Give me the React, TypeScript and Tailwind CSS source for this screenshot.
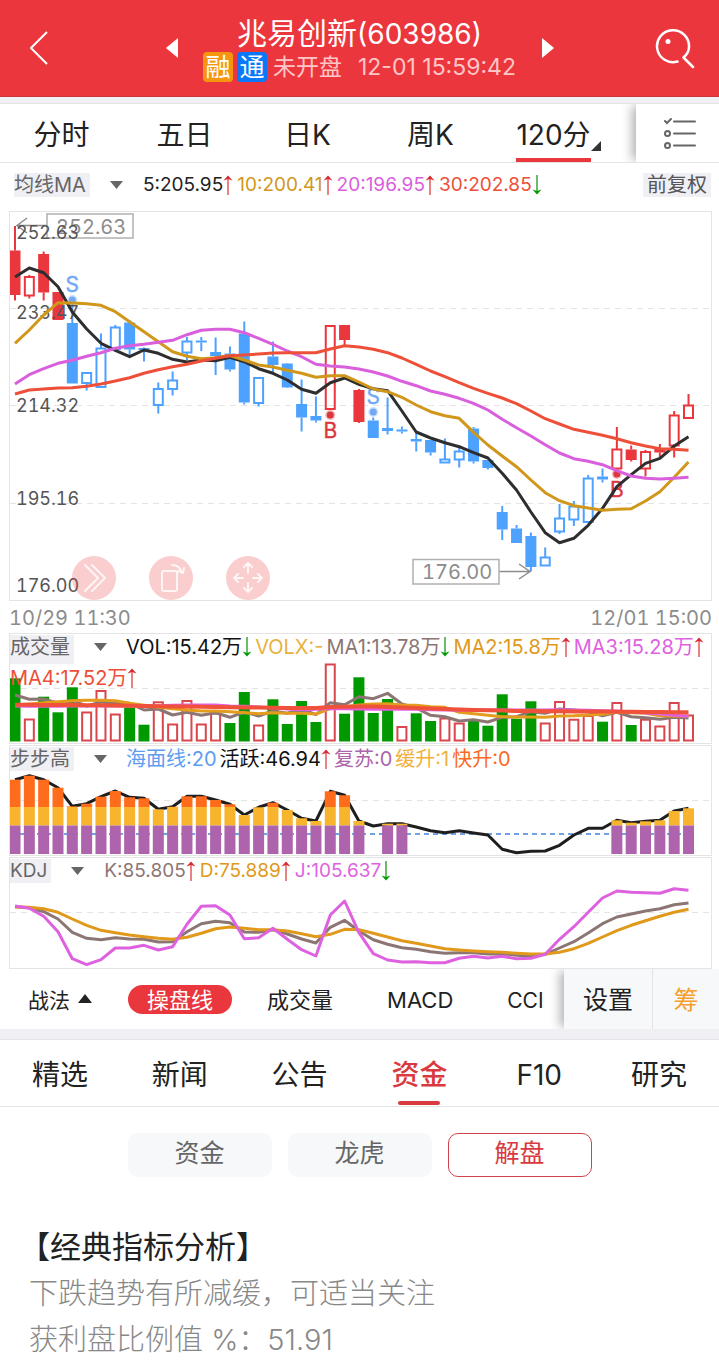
import React from "react";

const RED = "#ea363d";
const BLUE = "#4da1ff";

const STEP = 14.33;
const xAt = (i: number) => 15 + i * STEP;

type Kind = "R" | "r" | "B" | "b"; // upper case: filled body, lower case: hollow body
// kind, body top, body bottom, wick top, wick bottom
type Candle = [Kind, number, number, number, number];

const candles: Candle[] = [
  ["R", 250.5, 295, 226, 300.5], ["r", 277, 295.5, 275, 298.5], ["R", 254, 292.5, 251.5, 300.5], ["R", 292, 320, 292, 320],
  ["B", 323, 383.5, 300, 383.5], ["b", 373, 383, 373, 390.5], ["b", 348.5, 387, 333.5, 387], ["b", 327.5, 349, 325, 349],
  ["B", 322.5, 349.5, 320, 356], ["B", 348, 350, 347.5, 361.5], ["b", 389, 405, 382.5, 413.5], ["b", 380.5, 389, 371.5, 395.5],
  ["b", 341.5, 352.5, 337, 360], ["B", 340.5, 342.5, 337, 351], ["b", 353, 355, 337.5, 375], ["B", 353.5, 369.5, 346.5, 371.5],
  ["B", 333.5, 402.5, 321.5, 404.5], ["b", 378, 403, 378, 406.5], ["B", 356.5, 365, 341.5, 372.5], ["B", 363.5, 387.5, 363, 388],
  ["B", 404, 417.5, 379.5, 431.5], ["B", 416, 420.5, 396.5, 422.5], ["r", 326, 409, 326, 409], ["R", 325, 340, 325, 345],
  ["R", 390, 422, 389, 423], ["B", 420.5, 438, 417.5, 438], ["B", 428, 431, 397.5, 434.5], ["B", 429.5, 431.5, 426.5, 433.5],
  ["B", 439, 441.5, 432, 451.5], ["B", 440, 452.5, 440, 455.5], ["b", 459.5, 462.5, 438.5, 463], ["b", 451.5, 459.5, 445, 467.5],
  ["B", 428.5, 461.5, 427, 463.5], ["B", 460, 468, 460, 469.5], ["B", 512, 529.5, 506, 540], ["B", 528.5, 543, 525, 543],
  ["B", 536, 567, 532.5, 571.5], ["b", 557.5, 565.5, 547.5, 565.5], ["b", 518.5, 531.5, 504, 534], ["b", 506.5, 519.5, 501, 526],
  ["b", 478.5, 522, 475, 522], ["B", 476.5, 479.5, 468.5, 482.5], ["r", 449.5, 468.5, 427, 468.5], ["R", 449.5, 460, 445.5, 461.5],
  ["r", 452, 468.5, 450, 476.5], ["R", 448.5, 452.5, 444, 457], ["r", 415.5, 445.5, 411, 457.5], ["r", 405.5, 418, 394, 418],
];

const ma5 = [277, 268, 272.7, 286.7, 312, 329, 343.3, 350.3, 356.7, 350, 353.3, 359.3, 362, 360, 360.7, 357.3, 361.7, 368.7, 373.3, 380, 389.3, 393.3, 382.7, 378, 384.3, 388.7, 390.7, 411, 432, 438, 442.7, 446.7, 452.7, 458, 473.3, 490, 512, 532.7, 542.7, 538.3, 525.3, 508.3, 486.7, 474.7, 463.3, 458.3, 446, 436.7];
const ma10 = [343.3, 330, 315, 302.7, 303, 303.7, 305.3, 311.7, 321.7, 331.7, 341.7, 351.7, 356.3, 358.7, 357.7, 355.5, 360, 365, 367, 370.3, 373.3, 377.3, 375.7, 375.7, 382, 389, 391.7, 397.3, 405, 411.7, 415.7, 418.3, 432.3, 445, 456, 466.7, 480, 492.7, 500.7, 505.7, 508, 510.3, 509.3, 508.7, 501, 491.7, 477.3, 462];
const ma20 = [384, 374.7, 368.7, 363.3, 360.3, 356.3, 352.7, 348.3, 345.7, 344.3, 342.3, 340.3, 334.7, 330.3, 329.3, 329.3, 332.7, 338.3, 344.3, 351, 356.7, 364.3, 366, 367, 369, 372, 376, 381.3, 385.7, 391, 394.3, 398.3, 403.3, 410, 419.3, 427.7, 436, 444.7, 453, 458.7, 461.3, 464.7, 470.7, 476, 478.3, 479, 478.3, 477.3];
const ma30 = [394, 390, 389, 388, 387.7, 386.3, 384, 381, 377.7, 373.3, 369.7, 366.7, 364.3, 361, 358.3, 355.7, 355, 354, 353, 352.7, 352.7, 352.7, 349, 345.7, 347, 349.3, 352.7, 358, 364.3, 371, 376.7, 382.7, 388.3, 393.3, 398, 403.7, 411, 418.7, 424, 429.3, 432.3, 435.3, 438.7, 442.7, 446, 448.7, 449.3, 450.3];

const volumeTops = [678.3, 719.5, 696.7, 712.3, 687.3, 712.5, 691, 714.5, 707.5, 724.7, 702.3, 724.5, 701, 724.5, 713.5, 723, 692, 725.5, 699.3, 724, 701, 722, 664.5, 713.7, 677.3, 713, 699, 727, 713.3, 721, 718.5, 723.5, 721, 725.7, 694.3, 718.7, 701.3, 723.5, 702, 719.7, 716, 721.7, 703, 725, 719.7, 726.5, 703, 715.5];
const volumeKinds = "grgggrrrggrrrrrggrggggrggggrggrrgggggrrrrgrgrrrr";
const vma1 = [695, 699.3, 699, 703.3, 700.7, 706, 702, 703.3, 703.3, 710, 709, 715, 712.3, 715.3, 712.7, 717.3, 712, 716, 711, 713.3, 709, 714.7, 702.7, 704.7, 696.7, 698.7, 693.3, 704, 708, 715.3, 716.7, 721, 719.7, 722, 717.3, 716.7, 711.7, 713.3, 709, 710, 711.7, 715.7, 712.3, 716.7, 717.7, 719.3, 717.3, 718];
const vma2 = [705, 704, 702.7, 701.7, 700.7, 700.3, 700.3, 700.7, 703.3, 705.3, 707.3, 708.7, 710, 711, 711, 711.7, 712.7, 713.7, 712.7, 713.3, 713.3, 714, 708.7, 706.7, 705, 704, 703.7, 705, 705.3, 706.7, 707.3, 712.3, 713.7, 715.3, 716.7, 717, 717, 717.3, 716, 715.7, 715, 714.3, 712, 712.7, 713.3, 715.7, 716, 716];
const vma3 = [706, 706.3, 706.3, 706.3, 706, 706, 706, 706, 706, 706, 705.7, 705.3, 705, 705, 705, 706, 706.3, 707, 708, 709, 710, 709.3, 708.7, 708.7, 709, 709.3, 709.3, 709.3, 709.3, 709.7, 710, 710.3, 710, 710, 710, 710, 710, 710, 709.7, 710, 710.3, 710.7, 711, 712, 713, 714, 715.3, 716.3];
const vma4 = [704.7, 704.7, 705, 705, 705, 705.3, 705.3, 705.6, 705.8, 706, 706.2, 706.4, 706.6, 706.8, 707, 707.2, 707.4, 707.6, 707.8, 708, 708, 708, 707, 706.7, 706.6, 706.6, 707, 707.4, 708, 708.5, 709, 709.5, 710, 710.3, 710.6, 711, 711, 711.2, 711.3, 711.4, 711.5, 711.6, 711.7, 711.8, 712, 712.1, 712.2, 712.3];

const activity = [779.7, 775.7, 779.7, 787.7, 806.3, 803.7, 796.7, 791, 797.3, 798.3, 809.3, 806.7, 796.3, 796.3, 800, 804.3, 815, 807.3, 802.7, 810, 818.3, 821, 791.3, 795.3, 821, 826, 823.7, 823.7, 827, 830.7, 832.7, 830.7, 833, 835, 849.3, 852.7, 851.3, 851, 845.3, 835, 828.3, 828.3, 820.3, 822.7, 821.3, 820.3, 811, 808.3];

const kLine = [906.7, 907.7, 911.7, 919, 932.3, 938.3, 939.7, 937.7, 939, 939.3, 942, 941.7, 931.7, 923.7, 921.3, 922.7, 932, 932.3, 929.7, 934, 939, 943, 927.3, 920.3, 931, 939.7, 944.3, 947.7, 949.3, 951.7, 953.3, 952.7, 952.7, 954, 953.7, 955.3, 956, 954.3, 948, 941.7, 933, 923.7, 917, 914, 911, 908.7, 904.7, 903];
const dLine = [907, 907.3, 908.7, 912.3, 919, 925.3, 930.3, 932.7, 935, 936.7, 938.3, 939.3, 937.3, 933.3, 928.7, 927, 928.3, 929.7, 929.7, 931, 933.7, 936.7, 934.3, 929.3, 929.7, 933.3, 937, 940.7, 943.3, 946, 948.7, 950, 951, 951.7, 952.3, 953.3, 954, 954, 952.3, 948.7, 943.3, 937, 930.7, 925.3, 920.7, 916.3, 912.3, 909.3];
const jLine = [906, 908.3, 916.3, 931.7, 958.7, 964.7, 959.7, 948, 948, 945.3, 950, 946.7, 924.3, 906.3, 905.7, 915, 938.7, 937.7, 928.3, 939.3, 949.7, 956, 915, 901, 932.7, 953.7, 960, 962, 961.7, 962.7, 962.7, 958.3, 956.3, 958, 956.3, 958.7, 958.3, 954.3, 939.3, 926.7, 912.3, 898, 891, 892.3, 892.7, 893.3, 888.7, 890.3];

function Line({ data, color, width = 3 }: { data: number[]; color: string; width?: number }) {
  return (
    <polyline
      points={data.map((y, i) => `${xAt(i).toFixed(1)},${y}`).join(" ")}
      fill="none"
      stroke={color}
      strokeWidth={width}
      strokeLinejoin="round"
    />
  );
}

function GridLine({ y }: { y: number }) {
  return <line x1="10" x2="711" y1={y} y2={y} stroke="#e4e4e4" strokeDasharray="6 5" />;
}

function CandleShape({ candle, i }: { candle: Candle; i: number }) {
  const [kind, top, bottom, high, low] = candle;
  const color = kind.toLowerCase() === "r" ? RED : BLUE;
  const hollow = kind === kind.toLowerCase();
  const x = xAt(i);
  return (
    <g stroke={color}>
      {high < top && <line x1={x} x2={x} y1={high} y2={top} strokeWidth="2" />}
      {low > bottom && <line x1={x} x2={x} y1={bottom} y2={low} strokeWidth="2" />}
      {hollow ? (
        <rect x={x - 4.5} y={top} width="9" height={bottom - top} fill="none" strokeWidth="2" />
      ) : (
        <rect x={x - 5.5} y={top} width="11" height={bottom - top} fill={color} stroke="none" />
      )}
    </g>
  );
}

function Mark({ i, y, dot, label, color }: { i: number; y: number; dot: number; label: string; color: string }) {
  return (
    <g fill={color}>
      <circle cx={xAt(i)} cy={dot} r="5" opacity="0.35" />
      <circle cx={xAt(i)} cy={dot} r="3.5" />
      <text x={xAt(i)} y={y} textAnchor="middle" fontSize="21" stroke={color} strokeWidth="0.4">{label}</text>
    </g>
  );
}

function PriceChart() {
  const labels: [string, number][] = [["252.63", 239], ["233.47", 319], ["214.32", 412], ["195.16", 505], ["176.00", 592]];
  return (
    <svg viewBox="10 212 701 388" className="block w-full tabular-nums" role="img" aria-label="120分K线图">
      {[308.5, 405.5, 503.5].map((y) => <GridLine key={y} y={y} />)}
      {candles.map((c, i) => <CandleShape key={i} candle={c} i={i} />)}
      <g fill="none" stroke="#8c8c8c" strokeWidth="1.5">
        <path d="M47 225.5H17M27 218L17 225.5L27 233" />
        <path d="M499 571.5H530M519 564L530 571.5L519 579" />
      </g>
      <g fill="none" stroke="#b0b0b0" strokeWidth="1.5">
        <rect x="47" y="214" width="86" height="24" />
        <rect x="413" y="559.5" width="86" height="24.5" />
      </g>
      <g fill="#8c8c8c" fontSize="20">
        <text x="56" y="234">252.63</text>
        <text x="422" y="579">176.00</text>
      </g>
      <g fill="#555" fontSize="18">
        {labels.map(([t, y]) => <text key={t} x="16" y={y}>{t}</text>)}
      </g>
      <Mark i={4} y={292} dot={300} label="S" color="#72a8f5" />
      <Mark i={25} y={404} dot={412} label="S" color="#72a8f5" />
      <Mark i={22} y={438} dot={415} label="B" color="#d9383e" />
      <Mark i={42} y={497} dot={474} label="B" color="#d9383e" />
      <Line data={ma5} color="#2e2e2e" />
      <Line data={ma10} color="#d0971b" />
      <Line data={ma20} color="#d95fdc" />
      <Line data={ma30} color="#ed4f38" />
    </svg>
  );
}

function VolumeChart() {
  return (
    <svg viewBox="10 634 701 109" className="block w-full [grid-area:1/1]" role="img" aria-label="成交量图">
      <GridLine y={688.5} />
      {volumeTops.map((y, i) =>
        volumeKinds[i] === "g" ? (
          <rect key={i} x={xAt(i) - 5.5} y={y} width="11" height={741.5 - y} fill="#009a00" />
        ) : (
          <rect key={i} x={xAt(i) - 4.5} y={y} width="9" height={740.5 - y} fill="#fff" stroke="#d9464b" strokeWidth="2" />
        ),
      )}
      <Line data={vma1} color="#8c7674" />
      <Line data={vma2} color="#e39c1b" />
      <Line data={vma3} color="#e35fdf" />
      <Line data={vma4} color="#f0513a" width={4} />
    </svg>
  );
}

function ActivityChart() {
  return (
    <svg viewBox="10 746 701 109" className="block w-full [grid-area:1/1]" role="img" aria-label="步步高图">
      <GridLine y={800.5} />
      <line x1="10" x2="690" y1="834" y2="834" stroke="#6ea3e8" strokeWidth="2" strokeDasharray="5 4" />
      <Line data={activity} color="#1e1e1e" />
      {activity.map((y, i) =>
        y < 825 ? (
          <g key={i}>
            {y < 807 && <rect x={xAt(i) - 5.5} y={y} width="11" height={807 - y} fill="#ff6c1c" />}
            <rect x={xAt(i) - 5.5} y={Math.max(y, 807)} width="11" height={825.5 - Math.max(y, 807)} fill="#f8b42d" />
            <rect x={xAt(i) - 5.5} y="825.5" width="11" height="28.5" fill="#ad64ac" />
          </g>
        ) : null,
      )}
    </svg>
  );
}

function KdjChart() {
  return (
    <svg viewBox="10 858 701 110" className="block w-full [grid-area:1/1]" role="img" aria-label="KDJ图">
      <GridLine y={912.5} />
      <Line data={kLine} color="#8c7674" />
      <Line data={dLine} color="#e0991a" />
      <Line data={jLine} color="#de62df" />
    </svg>
  );
}

function Trend({ up }: { up: boolean }) {
  return (
    <svg viewBox="0 0 10 20" className="h-5 w-[10px] shrink-0" aria-hidden="true">
      {up ? (
        <>
          <path d="M5 3V20" stroke="#e2595c" strokeWidth="1.5" />
          <path d="M0.5 5.5L5 0.5L9.5 5.5L5 4Z" fill="#d9282f" />
        </>
      ) : (
        <>
          <path d="M5 0V17" stroke="#3aa53a" strokeWidth="1.5" />
          <path d="M0.5 14.5L5 19.5L9.5 14.5L5 16Z" fill="#009a00" />
        </>
      )}
    </svg>
  );
}

function Value({ text, className, dir }: { text: string; className: string; dir?: "up" | "down" }) {
  return (
    <span className={`flex items-center whitespace-nowrap ${className}`}>
      {text}
      {dir && <Trend up={dir === "up"} />}
    </span>
  );
}

function Picker({ label, tall = false }: { label: string; tall?: boolean }) {
  return (
    <button className={`mr-4 flex gap-5 self-start whitespace-nowrap text-[#666] ${tall ? "h-[29px]" : "h-6"}`}>
      <span className={`bg-[#efeff4] pr-1 leading-6 ${tall ? "h-[29px]" : "h-6"}`}>{label}</span>
      <svg viewBox="0 0 13 8" className="mt-2 h-2 w-[13px]" aria-hidden="true">
        <path d="M0 0H13L6.5 8Z" fill="#666" />
      </svg>
    </button>
  );
}

const PANEL = "grid border border-[#e4e4e4]";
const LEGEND = "z-10 flex flex-wrap content-start items-start pt-px leading-6 [grid-area:1/1]";

export default function App() {
  return (
    <div className="min-h-screen overflow-hidden bg-white font-['Inter','Noto_Sans_CJK_SC',sans-serif] text-[#222]">
      <header className="flex h-[97px] items-center justify-between border-b border-[#c9343a] bg-[#ec363d] px-[22px] text-white">
        <button aria-label="返回" className="w-11 pl-2">
          <svg viewBox="0 0 18 34" className="h-[34px] w-[18px]" fill="none" stroke="currentColor" strokeWidth="2">
            <path d="M17 1L1 17L17 33" />
          </svg>
        </button>
        <div className="flex items-center gap-[22px]">
          <button aria-label="上一只">
            <svg viewBox="0 0 12 20" className="h-5 w-3" fill="currentColor"><path d="M12 0V20L0 10Z" /></svg>
          </button>
          <div className="flex w-[320px] flex-col items-center whitespace-nowrap">
            <h1 className="text-[30px] leading-9">
              兆易创新<span className="text-[28px]">(603986)</span>
            </h1>
            <div className="flex items-center gap-1 text-[23px] leading-[30px] text-[#ffc6c8]">
              <span className="w-[30px] rounded-[4px] bg-[#f6960f] text-center text-[25px] text-white">融</span>
              <span className="w-[30px] rounded-[4px] bg-[#0a78fa] text-center text-[25px] text-white">通</span>
              <span className="ml-[2px]">未开盘</span>
              <time className="ml-3">12-01 15:59:42</time>
            </div>
          </div>
          <button aria-label="下一只">
            <svg viewBox="0 0 12 20" className="h-5 w-3" fill="currentColor"><path d="M0 0V20L12 10Z" /></svg>
          </button>
        </div>
        <button aria-label="搜索" className="w-11">
          <svg viewBox="0 0 42 42" className="ml-0.5 size-[42px]" fill="none" stroke="currentColor" strokeWidth="2.5" strokeLinecap="round" strokeLinejoin="round">
            <path d="M22.500 34.500A16 16 0 1 1 34 20C34 24 32 27.500 28.500 30.500L38 40" />
            <circle cx="13" cy="14.500" r="2.500" fill="currentColor" stroke="none" />
          </svg>
        </button>
      </header>

      <div className="h-[7px] border-b border-[#e4e4e4] bg-[#efeff4]" />

      <nav className="flex h-[59px] border-b border-[#e4e4e4] text-[28px]">
        <div className="flex flex-1 pr-[21px]">
          {["分时", "五日", "日K", "周K"].map((t) => (
            <button key={t} className="flex-1 pt-1">{t}</button>
          ))}
          <button className="flex flex-1 justify-center">
            <span className="relative flex h-[58px] items-center border-b-4 border-[#ea363d] pt-2">
              120分
              <svg viewBox="0 0 10 10" className="absolute bottom-[7px] left-full size-[10px]"><path d="M10 0V10H0Z" fill="#333" /></svg>
            </span>
          </button>
        </div>
        <button aria-label="更多设置" className="flex w-[83px] items-center justify-center pl-1 shadow-[-6px_0_10px_-2px_rgba(0,0,0,0.3)] [clip-path:inset(0_0_0_-20px)]">
          <svg viewBox="0 0 32 32" className="size-8" fill="none" stroke="#666" strokeWidth="2" strokeLinecap="round">
            <path d="M10 4.500H31M10 16.500H31M10 28.500H31" />
            <path d="M1 4L3 6L7 2" />
            <circle cx="3.500" cy="16.500" r="2.500" />
            <circle cx="3.500" cy="28.500" r="2.500" />
          </svg>
        </button>
      </nav>

      <main>
        <div className="flex items-center justify-between pt-[10px] pr-2 pb-[13px] pl-[14px] text-[19px] leading-6">
          <div className="flex items-center gap-1">
            <div className="text-[20px]"><Picker label="均线MA" /></div>
            <Value text="5:205.95" className="text-[#222]" dir="up" />
            <Value text="10:200.41" className="text-[#d0971b]" dir="up" />
            <Value text="20:196.95" className="text-[#d95fdc]" dir="up" />
            <Value text="30:202.85" className="text-[#ed4f38]" dir="down" />
          </div>
          <button className="h-6 bg-[#efeff4] px-1 text-[20px] leading-6 text-[#555]">前复权</button>
        </div>

        <div className="pr-[7px] pl-[9px]">
          <div className="relative mt-px border border-[#e4e4e4]">
            <PriceChart />
            <div className="absolute bottom-0 left-[62px] flex gap-[33px] text-white">
              {[
                ["快进", "M13 9L26 22L13 35M20 9L33 22L20 35"],
                ["旋转", "M15 15H26Q28 15 28 17V33Q28 35 26 35H15Q13 35 13 33V17Q13 15 15 15M23 9Q31 9 33 17M29 15L34 17L35 12"],
                ["移动", "M22 17V7M18 11L22 7L26 11M22 27V36M18 32L22 36L26 32M17 22H8M12 18L8 22L12 26M27 22H36M32 18L36 22L32 26"],
              ].map(([label, d]) => (
                <button key={label} aria-label={label} className="size-11 rounded-full bg-[#ea363d]/25">
                  <svg viewBox="0 0 44 44" className="size-11" fill="none" stroke="#fff" strokeOpacity="0.8" strokeWidth="2" strokeLinecap="round" strokeLinejoin="round">
                    <path d={d} />
                  </svg>
                </button>
              ))}
            </div>
          </div>

          <div className="-mr-1 flex h-8 items-center justify-between pt-0.5 pr-1 text-[20px] text-[#8c8c8c] tabular-nums">
            <time>10/29 11:30</time>
            <time>12/01 15:00</time>
          </div>

          <div className="flex flex-col gap-px">
            <section className={PANEL}>
              <VolumeChart />
              <div className={`${LEGEND} gap-x-[3px] text-[20px]`}>
                <Picker label="成交量" tall />
                <Value text="VOL:15.42万" className="text-[#111]" dir="down" />
                <Value text="VOLX:-" className="text-[#e8b13f]" />
                <Value text="MA1:13.78万" className="text-[#8c7674]" dir="down" />
                <Value text="MA2:15.8万" className="text-[#e0991a]" dir="up" />
                <Value text="MA3:15.28万" className="text-[#de62df]" dir="up" />
                <Value text="MA4:17.52万" className="pt-0.5 text-[#ed4f38]" dir="up" />
              </div>
            </section>
            <section className={PANEL}>
              <ActivityChart />
              <div className={`${LEGEND} gap-x-[3px] text-[20px]`}>
                <Picker label="步步高" />
                <Value text="海面线:20" className="text-[#5e9cf0]" />
                <Value text="活跃:46.94" className="text-[#111]" dir="up" />
                <Value text="复苏:0" className="text-[#ad64ac]" />
                <Value text="缓升:1" className="text-[#f2b03a]" />
                <Value text="快升:0" className="text-[#fa6a22]" />
              </div>
            </section>
            <section className={PANEL}>
              <KdjChart />
              <div className={`${LEGEND} gap-x-1 text-[19px]`}>
                <Picker label="KDJ" />
                <Value text="K:85.805" className="text-[#8c7674]" dir="up" />
                <Value text="D:75.889" className="text-[#e0991a]" dir="up" />
                <Value text="J:105.637" className="text-[#de62df]" dir="down" />
              </div>
            </section>
          </div>
        </div>

        <div className="flex h-[60px] text-[22px]">
          <div className="flex min-w-0 flex-1 items-center pt-[3px] pl-7 whitespace-nowrap">
            <button className="flex items-center gap-2 text-[21px]">
              战法
              <svg viewBox="0 0 14 9" className="mb-1 h-[9px] w-[14px]"><path d="M0 9H14L7 0Z" fill="#222" /></svg>
            </button>
            <button className="mb-[3px] ml-9 h-[29px] w-[104px] shrink-0 rounded-full bg-[#ea363d] pt-[2px] leading-[27px] text-white">操盘线</button>
            <button className="ml-[35px]">成交量</button>
            <button className="ml-[54px]">MACD</button>
            <button className="ml-[54px] text-[21px]">CCI</button>
          </div>
          <button className="w-[89px] border-r border-[#e4e4e4] bg-[#f7f8fa] pt-1 text-[25px] shadow-[-6px_0_10px_-2px_rgba(0,0,0,0.3)] [clip-path:inset(0_0_0_-20px)]">设置</button>
          <button className="w-[66px] bg-[#f7f8fa] pt-1 text-[25px] text-[#f5a02c]">筹</button>
        </div>

        <div className="h-[11px] border-b border-[#e4e4e4] bg-[#efeff4]" />

        <nav className="flex h-[67px] border-b border-[#e4e4e4] text-[28px]">
          {["精选", "新闻", "公告", "资金", "F10", "研究"].map((t) => (
            <button
              key={t}
              className={`flex flex-1 flex-col items-center justify-end ${t === "资金" ? "font-medium text-[#d93a40]" : ""}`}
            >
              <span className="leading-[46px]">{t}</span>
              <span className={`mt-[3px] mb-px h-1 w-[42px] rounded-full ${t === "资金" ? "bg-[#d93a40]" : ""}`} />
            </button>
          ))}
        </nav>

        <div className="flex justify-center gap-4 pt-[26px] text-[25px] text-[#666]">
          <button className="h-11 w-36 rounded-[10px] bg-[#f7f8fa] pb-[2px]">资金</button>
          <button className="h-11 w-36 rounded-[10px] bg-[#f7f8fa] pb-[2px]">龙虎</button>
          <button className="h-11 w-36 rounded-[10px] border border-[#cf4449] pb-[2px] text-[#d93a40]">解盘</button>
        </div>

        <article className="px-[29px] pt-[47px] text-[29px] leading-[46px] font-light text-[#888]">
          <h2 className="-ml-[10px] pb-px text-[31px] font-normal text-[#222]">【经典指标分析】</h2>
          <p>下跌趋势有所减缓，可适当关注</p>
          <p>获利盘比例值 %：51.91</p>
        </article>
      </main>
    </div>
  );
}
